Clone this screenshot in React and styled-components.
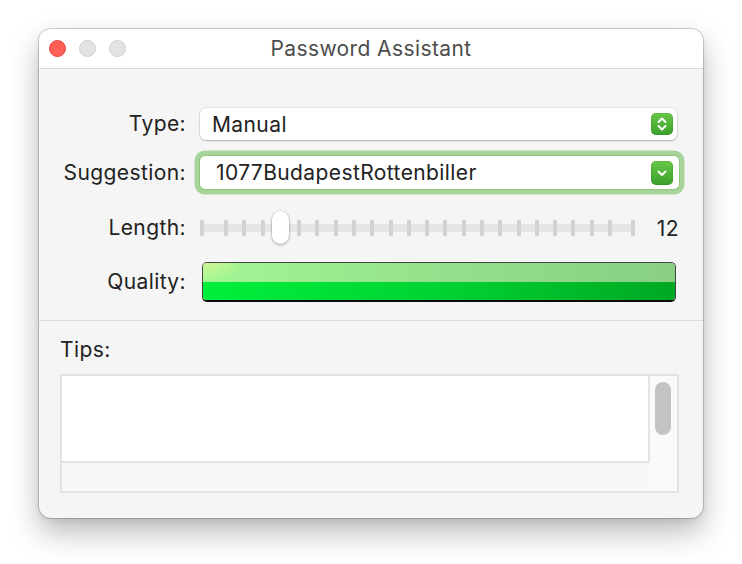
import React from 'react';
import styled, { createGlobalStyle } from 'styled-components';

const GlobalStyle = createGlobalStyle`
  html, body {
    margin: 0;
    background: #ffffff;
  }
  body {
    font-family: "Inter", "Helvetica Neue", "Liberation Sans", sans-serif;
    -webkit-font-smoothing: antialiased;
  }
`

const Page = styled.div`
  padding: 29px 0 46px 39px;
`

const Window = styled.div`
  width: 664px;
  height: 489px;
  border-radius: 12px;
  overflow: hidden;
  background: #f5f5f5;
  box-shadow: 0 0 0 1px rgba(0, 0, 0, 0.16), 0 14px 30px rgba(0, 0, 0, 0.28), 0 2px 6px rgba(0, 0, 0, 0.08);
  display: flex;
  flex-direction: column;
`

const TitleBar = styled.div`
  height: 39px;
  background: #ffffff;
  border-bottom: 1px solid #d9d9d9;
  display: grid;
  grid-template-columns: 1fr auto 1fr;
  align-items: center;
`

const Lights = styled.div`
  display: flex;
  gap: 13px;
  padding-left: 10px;
`

const Light = styled.span`
  width: 15px;
  height: 15px;
  border-radius: 50%;
  background: ${p => (p.$red ? '#fe5f57' : '#e3e3e3')};
  border: 1px solid ${p => (p.$red ? '#e2463f' : '#d0d0d0')};
`

const Title = styled.div`
  font-size: 21px;
  letter-spacing: 0.4px;
  color: #4d4d4d;
`

const Form = styled.div`
  display: flex;
  flex-direction: column;
  padding: 0 24px 18px 0;
  border-bottom: 1px solid #dcdcdc;
`

const Row = styled.div`
  display: grid;
  grid-template-columns: 147px 1fr;
  column-gap: 14px;
  align-items: center;
  height: ${p => p.$h}px;
  margin-top: ${p => p.$mt}px;
`

const Label = styled.div`
  text-align: right;
  font-size: 21px;
  letter-spacing: 0.4px;
  line-height: 24px;
  color: #222;
`

const Popup = styled.div`
  height: 32px;
  background: #ffffff;
  border-radius: 6px;
  box-shadow: 0 0 0 0.5px rgba(0, 0, 0, 0.12), 0 1px 2px rgba(0, 0, 0, 0.22);
  display: flex;
  align-items: center;
  justify-content: space-between;
  padding: 0 4px 0 12px;
  font-size: 21px;
  letter-spacing: 0.4px;
  color: #222;
  margin-right: 2px;
`

const Combo = styled.div`
  height: 33px;
  background: #ffffff;
  border-radius: 5px;
  box-shadow: 0 0 0 1px #8fc57c, 0 0 0 5.5px #a6d49a;
  display: flex;
  align-items: center;
  justify-content: space-between;
  padding: 0 6px 0 16px;
  font-size: 21px;
  letter-spacing: 0.4px;
  color: #222;
`

const GreenButton = styled.span`
  width: 22px;
  height: ${p => p.$h}px;
  border-radius: 5px;
  background: linear-gradient(#67c846, #3b9f2b);
  box-shadow: inset 0 0 0 0.5px rgba(0, 0, 0, 0.15);
  display: flex;
  align-items: center;
  justify-content: center;
`

const SliderRow = styled.div`
  display: flex;
  align-items: center;
  justify-content: space-between;
`

const Track = styled.div`
  position: relative;
  width: 435px;
  height: 8px;
  border-radius: 4px;
  background: #e6e6e6;
  display: flex;
  align-items: center;
`

const Tick = styled.span`
  flex: none;
  width: 4px;
  height: 16px;
  border-radius: 1px;
  background: #d3d3d3;
`

const TickGroup = styled.div`
  display: flex;
  justify-content: space-between;
  width: 388px;
  margin-left: 20px;
  margin-right: auto;
`

const Knob = styled.span`
  position: absolute;
  left: ${p => p.$left}px;
  top: -13px;
  width: 17px;
  height: 33px;
  border-radius: 9px;
  background: #ffffff;
  box-shadow: 0 0 0 0.5px rgba(0, 0, 0, 0.12), 0 1px 3px rgba(0, 0, 0, 0.3);
`

const Value = styled.span`
  font-size: 21px;
  letter-spacing: 0.4px;
  color: #222;
`

const Meter = styled.div`
  height: 40px;
  margin: 0 3px 0 2px;
  box-sizing: border-box;
  border: 1.5px solid #444;
  border-bottom: 2px solid #0a0a0a;
  border-radius: 5px;
  overflow: hidden;
  display: flex;
  flex-direction: column;
`

const MeterTop = styled.div`
  flex: 1;
  background:
    radial-gradient(ellipse 40px 18px at 0 0, rgba(225, 248, 150, 0.75), rgba(225, 248, 150, 0)),
    linear-gradient(to right, #a2f693, #94e08c 50%, #88cf82);
`

const MeterBottom = styled.div`
  flex: 1;
  background: linear-gradient(to right, #00ef3b, #00d332 50%, #00a823);
`

const Tips = styled.div`
  flex: 1;
  display: flex;
  flex-direction: column;
  padding: 17px 24px 25px 21px;
`

const TipsLabel = styled.div`
  font-size: 21px;
  letter-spacing: 0.4px;
  line-height: 24px;
  color: #222;
  margin-bottom: 12px;
`

const TipsBox = styled.div`
  flex: 1;
  border: 2px solid #e3e3e3;
  background: #f8f8f8;
  display: grid;
  grid-template-columns: 1fr 27px;
  grid-template-rows: 1fr 28px;
`

const TipsText = styled.div`
  background: #ffffff;
  border-right: 2px solid #e4e4e4;
  border-bottom: 2px solid #e4e4e4;
`

const Scroller = styled.div`
  grid-row: 1 / 3;
  grid-column: 2;
  background: #fafafa;
  padding: 6px 5px;
`

const Thumb = styled.div`
  width: 16px;
  height: 53px;
  border-radius: 8px;
  background: #c3c3c3;
`

const Stepper = () => (
  <svg width="12" height="16" viewBox="0 0 12 16">
    <path d="M2.5 6 L6 2.5 L9.5 6 M2.5 10 L6 13.5 L9.5 10" fill="none" stroke="#fff" strokeWidth="2" strokeLinecap="round" strokeLinejoin="round" />
  </svg>
);

const Chevron = () => (
  <svg width="12" height="10" viewBox="0 0 12 10">
    <path d="M2.5 3.5 L6 7 L9.5 3.5" fill="none" stroke="#fff" strokeWidth="2" strokeLinecap="round" strokeLinejoin="round" />
  </svg>
);

const App = () => {
  const middleTicks = Array.from({ length: 22 });
  return (
    <Page>
      <GlobalStyle />
      <Window>
        <TitleBar>
          <Lights>
            <Light $red />
            <Light />
            <Light />
          </Lights>
          <Title>Password Assistant</Title>
          <div />
        </TitleBar>

        <Form>
          <Row $h={32} $mt={39}>
            <Label>Type:</Label>
            <Popup>
              <span>Manual</span>
              <GreenButton $h={22}><Stepper /></GreenButton>
            </Popup>
          </Row>
          <Row $h={33} $mt={16}>
            <Label>Suggestion:</Label>
            <Combo>
              <span>1077BudapestRottenbiller</span>
              <GreenButton $h={24}><Chevron /></GreenButton>
            </Combo>
          </Row>
          <Row $h={34} $mt={22}>
            <Label>Length:</Label>
            <SliderRow>
              <Track>
                <Tick />
                <TickGroup>
                  {middleTicks.map((_, i) => <Tick key={i} />)}
                </TickGroup>
                <Tick />
                <Knob $left={72} />
              </Track>
              <Value>12</Value>
            </SliderRow>
          </Row>
          <Row $h={40} $mt={17}>
            <Label>Quality:</Label>
            <Meter>
              <MeterTop />
              <MeterBottom />
            </Meter>
          </Row>
        </Form>

        <Tips>
          <TipsLabel>Tips:</TipsLabel>
          <TipsBox>
            <TipsText />
            <Scroller>
              <Thumb />
            </Scroller>
            <div />
          </TipsBox>
        </Tips>
      </Window>
    </Page>
  );
};

export default App;
